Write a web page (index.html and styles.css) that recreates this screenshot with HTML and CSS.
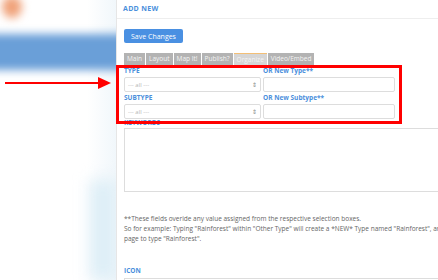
FILE: index.html
```html
<!DOCTYPE html>
<html lang="en">
<head>
    <meta charset="UTF-8">
    <title>Add New - Organize</title>
    <link rel="stylesheet" href="styles.css">
</head>
<body>
    <div class="page">
        <div class="sidebar">
            <div class="blob"></div>
            <div class="band"></div>
            <div class="glow"></div>
        </div>

        <div class="panel">
            <div class="panel-head">ADD NEW</div>

            <button class="save-btn">Save Changes</button>

            <div class="tabs">
                <span class="tab">Main</span>
                <span class="tab">Layout</span>
                <span class="tab">Map It!</span>
                <span class="tab">Publish?</span>
                <span class="tab active">Organize</span>
                <span class="tab">Video/Embed</span>
            </div>

            <div class="row">
                <div class="col-left">
                    <label class="field-label">TYPE</label>
                    <div class="select"><span>--- all ---</span><span class="arrows">&#8661;</span></div>
                </div>
                <div class="col-right">
                    <label class="field-label">OR New Type**</label>
                    <div class="text-input"></div>
                </div>
            </div>

            <div class="row">
                <div class="col-left">
                    <label class="field-label">SUBTYPE</label>
                    <div class="select"><span>--- all ---</span><span class="arrows">&#8661;</span></div>
                </div>
                <div class="col-right">
                    <label class="field-label">OR New Subtype**</label>
                    <div class="text-input"></div>
                </div>
            </div>

            <label class="field-label keywords">KEYWORDS</label>
            <div class="textarea"></div>

            <p class="note">
                **These fields overide any value assigned from the respective selection boxes.<br>
                So for example: Typing "Rainforest" within "Other Type" will create a *NEW* Type named "Rainforest", and set this<br>
                page to type "Rainforest".
            </p>

            <label class="field-label icon-label">ICON</label>
            <div class="icon-input"></div>
        </div>
    </div>

    <!-- annotation overlay -->
    <div class="highlight"></div>
    <div class="arrow">
        <div class="arrow-line"></div>
        <div class="arrow-head"></div>
    </div>
</body>
</html>
```

FILE: styles.css
```css
body {
    margin: 0;
    padding: 0;
    font-family: "Open Sans", "Liberation Sans", sans-serif;
    background-color: #ffffff;
    overflow: hidden;
}

.page {
    display: flex;
    height: 280px;
}

/* blurred sidebar behind the modal */
.sidebar {
    width: 116px;
    flex-shrink: 0;
    position: relative;
    overflow: hidden;
    background: linear-gradient(to right, #ffffff 0, #ffffff 75%, #f1f7fb 100%);
}

.blob {
    position: absolute;
    left: 2px;
    top: -4px;
    width: 20px;
    height: 22px;
    border-radius: 50%;
    background: #f0a27a;
    filter: blur(4px);
}

.band {
    position: absolute;
    left: -10px;
    right: -10px;
    top: 34px;
    height: 36px;
    background: #6a9fd8;
    filter: blur(4px);
}

.glow {
    position: absolute;
    right: 0;
    top: 180px;
    width: 26px;
    height: 100px;
    background: #dcedf6;
    filter: blur(8px);
}

.panel {
    flex: 1;
    background-color: #ffffff;
    padding-left: 7px;
    box-shadow: -2px 0 4px rgba(0, 0, 0, 0.12);
    border-left: 1px solid #e6e6e6;
}

.panel-head {
    height: 18px;
    line-height: 18px;
    font-size: 7px;
    font-weight: bold;
    color: #4a8fdc;
    letter-spacing: 0.3px;
    border-bottom: 1px solid #eeeeee;
    margin-left: -7px;
    padding-left: 6px;
}

.save-btn {
    display: block;
    margin-top: 10px;
    width: 59px;
    height: 14px;
    padding: 0;
    border: none;
    border-radius: 2px;
    background-color: #4a90e2;
    color: #ffffff;
    font-family: inherit;
    font-size: 7px;
}

.tabs {
    display: flex;
    gap: 1px;
    margin-top: 10px;
    height: 12px;
}

.tab {
    background-color: #b3b3b3;
    color: #f4f4f4;
    font-size: 6.5px;
    line-height: 12px;
    padding: 0 3px;
}

.tab.active {
    background-color: #d6d6d6;
    border-top: 1px solid #f3bf76;
    line-height: 11px;
}

.row {
    display: flex;
    gap: 2px;
}

.col-left {
    width: 137px;
}

.col-right {
    width: 132px;
}

.field-label {
    display: block;
    font-size: 6.5px;
    font-weight: bold;
    color: #4a8fdc;
    height: 12px;
    line-height: 12px;
}

.select,
.text-input {
    height: 13px;
    border: 1px solid #dddddd;
    border-radius: 2px;
    box-sizing: content-box;
}

.select {
    display: flex;
    justify-content: space-between;
    align-items: center;
    font-size: 6px;
    color: #b5b5b5;
    padding: 0 3px;
}

.arrows {
    font-size: 6px;
    color: #888888;
}

.keywords {
    height: 7px;
    line-height: 7px;
}

.textarea {
    height: 62px;
    border: 1px solid #dddddd;
    margin-right: -4px;
    margin-top: 2px;
}

.note {
    margin: 22px 0 0;
    font-size: 6.5px;
    line-height: 10px;
    color: #666666;
    white-space: nowrap;
}

.icon-label {
    margin-top: 21px;
}

.icon-input {
    height: 10px;
    border: 1px solid #dddddd;
    margin-top: 1px;
}

/* red highlight annotation */
.highlight {
    position: absolute;
    left: 116px;
    top: 65px;
    width: 280px;
    height: 53px;
    border: 3px solid #ff0000;
}

.arrow {
    position: absolute;
    left: 5px;
    top: 77px;
    display: flex;
    align-items: center;
    height: 12px;
}

.arrow-line {
    width: 93px;
    height: 2px;
    background-color: #ff0000;
}

.arrow-head {
    width: 0;
    height: 0;
    border-top: 6px solid transparent;
    border-bottom: 6px solid transparent;
    border-left: 13px solid #ff0000;
}
```
